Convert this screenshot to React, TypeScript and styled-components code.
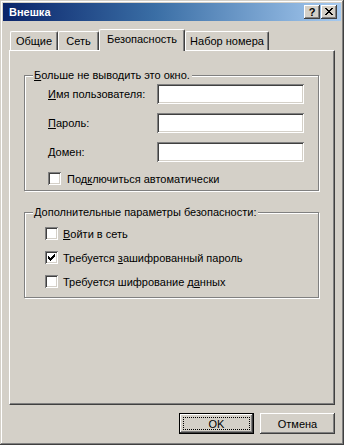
import React from "react";
import styled, { createGlobalStyle } from "styled-components";

const Global = createGlobalStyle`
  html, body { margin: 0; padding: 0; background: #d4d0c8; }
  body {
    font-family: "Liberation Sans", Arial, sans-serif;
    font-size: 11px;
    color: #000;
  }
  #root { width: 344px; height: 445px; }
  * { box-sizing: border-box; }
`;

const Window = styled.div`
  width: 344px;
  height: 445px;
  padding: 3px;
  background: #d4d0c8;
  box-shadow: inset -1px -1px #404040, inset 1px 1px #d4d0c8,
    inset -2px -2px #808080, inset 2px 2px #ffffff;
  display: flex;
  flex-direction: column;
`;

const TitleBar = styled.div`
  height: 18px;
  flex: none;
  display: flex;
  align-items: center;
  gap: 1px;
  padding: 0 4px 0 6px;
  background: linear-gradient(to right, #0a246a 0%, #3a6ea5 45%, #a6caf0 100%);
`;

const Title = styled.span`
  flex: 1;
  color: #fff;
  font-weight: bold;
  font-size: 11px;
  line-height: 18px;
`;

const CaptionButton = styled.div`
  width: 16px;
  height: 14px;
  background: #d4d0c8;
  box-shadow: inset -1px -1px #404040, inset 1px 1px #ffffff,
    inset -2px -2px #808080, inset 2px 2px #d4d0c8;
  display: flex;
  align-items: center;
  justify-content: center;
  font-weight: bold;
  font-size: 11px;
  line-height: 14px;
  padding-bottom: 1px;
`;

const Content = styled.div`
  flex: 1;
  display: flex;
  flex-direction: column;
  padding: 8px 6px 8px 6px;
`;

const TabStrip = styled.div`
  height: 21px;
  flex: none;
  display: flex;
  align-items: flex-end;
  padding-left: 1px;
  position: relative;
  z-index: 2;
`;

const Tab = styled.div<{ $w: number; $active?: boolean }>`
  width: ${(p) => p.$w}px;
  height: ${(p) => (p.$active ? 22 : 19)}px;
  margin-bottom: ${(p) => (p.$active ? -1 : 0)}px;
  background: #d4d0c8;
  border-left: 1px solid #fff;
  border-top: 1px solid #fff;
  border-right: 1px solid #404040;
  border-radius: 2px 2px 0 0;
  box-shadow: inset -1px 0 #808080;
  display: flex;
  align-items: center;
  justify-content: center;
  padding-bottom: ${(p) => (p.$active ? 3 : 1)}px;
  white-space: nowrap;
`;

const Panel = styled.div`
  flex: 1;
  position: relative;
  z-index: 1;
  border-top: 1px solid #fff;
  border-left: 1px solid #fff;
  border-right: 1px solid #404040;
  border-bottom: 1px solid #404040;
  box-shadow: inset -1px -1px #808080;
  padding: 24px 15px 0 14px;
  display: flex;
  flex-direction: column;
`;

const Group = styled.div<{ $pad: string; $mt?: number }>`
  position: relative;
  border: 1px solid #808080;
  box-shadow: inset 1px 1px #fff, 1px 1px #fff;
  padding: ${(p) => p.$pad};
  margin-top: ${(p) => p.$mt ?? 0}px;
`;

const Legend = styled.span`
  position: absolute;
  left: 8px;
  top: -7px;
  line-height: 13px;
  padding: 0 2px 0 1px;
  background: #d4d0c8;
  white-space: nowrap;
`;

const FieldGrid = styled.div`
  display: grid;
  grid-template-columns: 109px 147px;
  grid-auto-rows: 20px;
  row-gap: 9px;
  align-items: center;
`;

const Field = styled.div`
  height: 20px;
  background: #fff;
  box-shadow: inset 1px 1px #808080, inset -1px -1px #fff,
    inset 2px 2px #404040, inset -2px -2px #d4d0c8;
`;

const CheckList = styled.div<{ $gap: number; $mt?: number }>`
  display: flex;
  flex-direction: column;
  gap: ${(p) => p.$gap}px;
  margin-top: ${(p) => p.$mt ?? 0}px;
`;

const CheckRow = styled.div<{ $gap: number }>`
  display: flex;
  align-items: center;
  gap: ${(p) => p.$gap}px;
  height: 13px;
  white-space: nowrap;
`;

const Box = styled.div`
  width: 13px;
  height: 13px;
  flex: none;
  background: #fff;
  box-shadow: inset 1px 1px #808080, inset -1px -1px #fff,
    inset 2px 2px #404040, inset -2px -2px #d4d0c8;
  position: relative;
  svg {
    position: absolute;
    left: 3px;
    top: 3px;
  }
`;

const ButtonRow = styled.div`
  flex: none;
  display: flex;
  justify-content: flex-end;
  gap: 6px;
  margin-top: 8px;
`;

const Button = styled.div<{ $default?: boolean }>`
  width: 75px;
  height: 21px;
  position: relative;
  display: flex;
  align-items: center;
  justify-content: center;
  background: #d4d0c8;
  border: ${(p) => (p.$default ? "1px solid #000" : "none")};
  box-shadow: inset -1px -1px #404040, inset 1px 1px #ffffff,
    inset -2px -2px #808080, inset 2px 2px #d4d0c8;
  ${(p) =>
    p.$default &&
    `&::after {
      content: "";
      position: absolute;
      left: 3px; top: 3px; right: 3px; bottom: 3px;
      border: 1px dotted #000;
    }`}
`;

const Key = styled.span`
  text-decoration: underline;
`;

const Check = () => (
  <svg width="7" height="7" viewBox="0 0 7 7" shapeRendering="crispEdges">
    {[2, 3, 4, 3, 2, 1, 0].map((y, x) => (
      <rect key={x} x={x} y={y} width="1" height="3" fill="#000" />
    ))}
  </svg>
);

const CloseGlyph = () => (
  <svg width="8" height="7" viewBox="0 0 8 7" shapeRendering="crispEdges">
    {[0, 1, 2, 3, 4, 5, 6].map((i) => (
      <React.Fragment key={i}>
        <rect x={i} y={i} width="2" height="1" fill="#000" />
        <rect x={6 - i} y={i} width="2" height="1" fill="#000" />
      </React.Fragment>
    ))}
  </svg>
);

const CheckItem = ({
  checked,
  gap,
  children,
}: {
  checked?: boolean;
  gap: number;
  children: React.ReactNode;
}) => (
  <CheckRow $gap={gap}>
    <Box>{checked && <Check />}</Box>
    <span>{children}</span>
  </CheckRow>
);

export default function App() {
  return (
    <>
      <Global />
      <Window>
        <TitleBar>
          <Title>Внешка</Title>
          <CaptionButton>?</CaptionButton>
          <CaptionButton>
            <CloseGlyph />
          </CaptionButton>
        </TitleBar>
        <Content>
          <TabStrip>
            <Tab $w={48}>Общие</Tab>
            <Tab $w={41}>Сеть</Tab>
            <Tab $w={86} $active>
              Безопасность
            </Tab>
            <Tab $w={84}>Набор номера</Tab>
          </TabStrip>
          <Panel>
            <Group $pad="8px 14px 5px 23px">
              <Legend>
                <Key>Б</Key>ольше не выводить это окно.
              </Legend>
              <FieldGrid>
                <span>
                  <Key>И</Key>мя пользователя:
                </span>
                <Field />
                <span>
                  <Key>П</Key>ароль:
                </span>
                <Field />
                <span>
                  <Key>Д</Key>омен:
                </span>
                <Field />
              </FieldGrid>
              <CheckList $gap={0} $mt={10}>
                <CheckItem gap={6}>
                  Под<Key>к</Key>лючиться автоматически
                </CheckItem>
              </CheckList>
            </Group>
            <Group $pad="14px 14px 9px 20px" $mt={21}>
              <Legend>Дополнительные параметры безопасности:</Legend>
              <CheckList $gap={11}>
                <CheckItem gap={5}>
                  <Key>В</Key>ойти в сеть
                </CheckItem>
                <CheckItem gap={5} checked>
                  Требуется <Key>з</Key>ашифрованный пароль
                </CheckItem>
                <CheckItem gap={5}>
                  Требуется шифрование д<Key>а</Key>нных
                </CheckItem>
              </CheckList>
            </Group>
          </Panel>
          <ButtonRow>
            <Button $default>OK</Button>
            <Button>Отмена</Button>
          </ButtonRow>
        </Content>
      </Window>
    </>
  );
}
